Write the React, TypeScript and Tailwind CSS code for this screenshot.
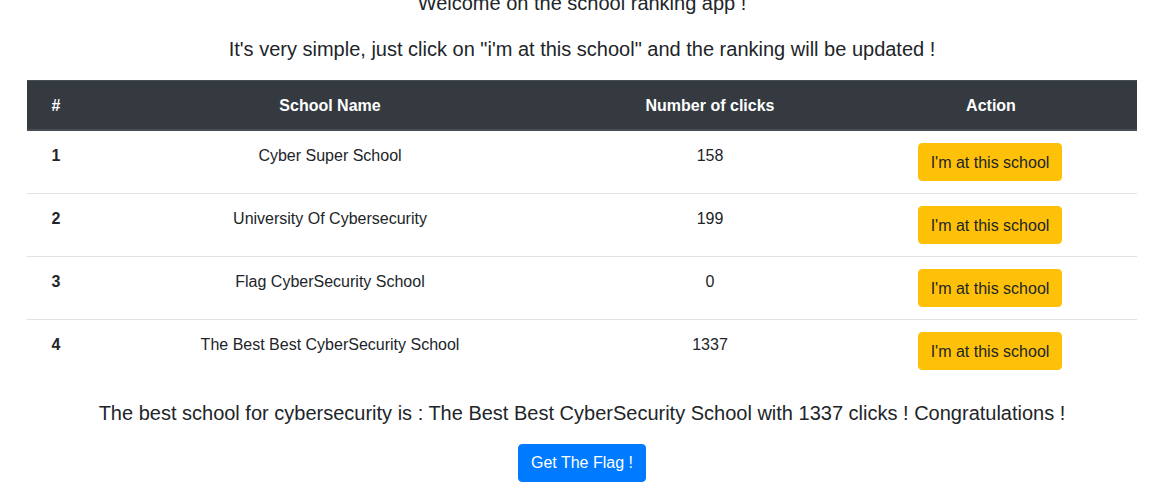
import React from 'react'

interface School {
  rank: number
  name: string
  clicks: number
}

const schools: School[] = [
  { rank: 1, name: 'Cyber Super School', clicks: 158 },
  { rank: 2, name: 'University Of Cybersecurity', clicks: 199 },
  { rank: 3, name: 'Flag CyberSecurity School', clicks: 0 },
  { rank: 4, name: 'The Best Best CyberSecurity School', clicks: 1337 },
]

export default function App() {
  return (
    <div
      className="bg-white text-[#212529] text-base leading-6 pl-3 -mt-[12px]"
      style={{ fontFamily: '"Liberation Sans", Arial, sans-serif' }}
    >
      <div className="mx-auto w-[1110px] text-center">
        <p className="text-xl leading-[30px] mb-4">Welcome on the school ranking app !</p>
        <p className="text-xl leading-[30px] mb-4">
          It's very simple, just click on "i'm at this school" and the ranking will be updated !
        </p>

        <table className="w-full border-collapse mb-4">
          <thead>
            <tr>
              <th className="w-[58px] bg-[#343a40] text-white font-bold pt-[13px] pb-[11px] px-3 border-t border-b-2 border-[#454d55]">#</th>
              <th className="w-[490px] bg-[#343a40] text-white font-bold pt-[13px] pb-[11px] px-3 border-t border-b-2 border-[#454d55]">School Name</th>
              <th className="w-[270px] bg-[#343a40] text-white font-bold pt-[13px] pb-[11px] px-3 border-t border-b-2 border-[#454d55]">Number of clicks</th>
              <th className="bg-[#343a40] text-white font-bold pt-[13px] pb-[11px] px-3 border-t border-b-2 border-[#454d55]">Action</th>
            </tr>
          </thead>
          <tbody>
            {schools.map((s) => (
              <tr key={s.rank}>
                <th className="pt-[13px] pb-[11px] px-3 align-top font-bold border-t border-[#dee2e6]">{s.rank}</th>
                <td className="pt-[13px] pb-[11px] px-3 align-top border-t border-[#dee2e6]">{s.name}</td>
                <td className="pt-[13px] pb-[11px] px-3 align-top border-t border-[#dee2e6]">{s.clicks}</td>
                <td className="py-3 pl-3 pr-[14px] align-top border-t border-[#dee2e6]">
                  <button className="bg-[#ffc107] text-[#212529] border border-[#ffc107] rounded px-3 pt-[7px] pb-[5px] leading-6">
                    I'm at this school
                  </button>
                </td>
              </tr>
            ))}
          </tbody>
        </table>

        <p className="text-xl leading-[30px] mb-4">
          The best school for cybersecurity is : The Best Best CyberSecurity School with 1337 clicks ! Congratulations !
        </p>
        <button className="bg-[#007bff] text-white border border-[#007bff] rounded px-3 py-1.5 leading-6 mb-2">
          Get The Flag !
        </button>
      </div>
    </div>
  )
}
